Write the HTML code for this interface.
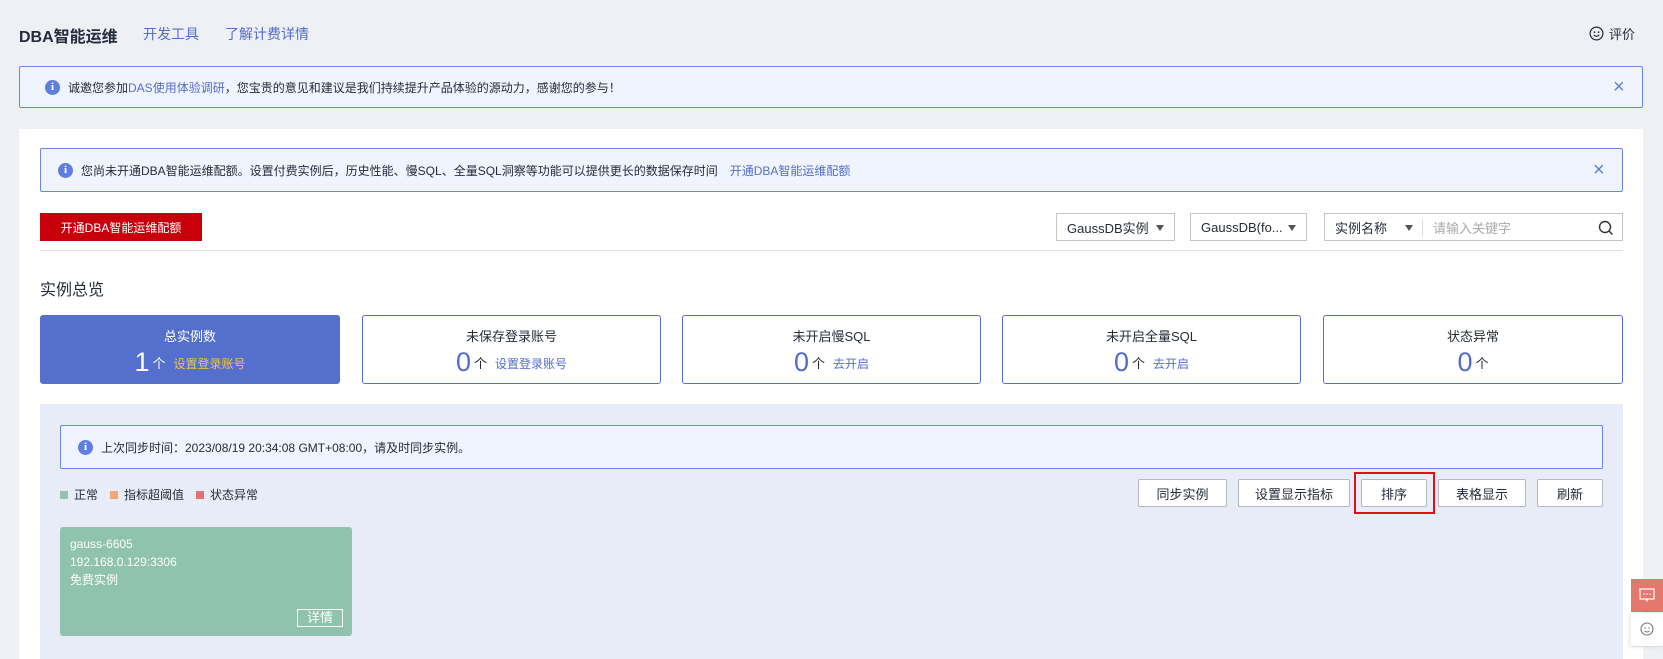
<!DOCTYPE html>
<html><head><meta charset="utf-8"><style>
*{margin:0;padding:0;box-sizing:border-box}
body{width:1663px;height:659px;overflow:hidden;background:#eef0f5;font-family:"Liberation Sans","Noto Sans CJK SC",sans-serif;font-size:12px;color:#252b3a;position:relative}
.a{position:absolute}
.info{display:inline-block;width:15px;height:15px;border-radius:50%;background:#5f7fe0;color:#fff;font-size:11px;font-weight:bold;text-align:center;line-height:15px;font-family:"Liberation Serif",serif}
.banner{background:#f0f4fe;border:1px solid #6b88e6;border-radius:2px;display:flex;align-items:center}
.x{color:#5f7fe0;font-size:20px;position:absolute;line-height:1}
.sel{border:1px solid #c4c6cc;background:#fff;height:28px;display:flex;align-items:center;padding:0 10px;font-size:13px}
.tri{width:0;height:0;border-left:4px solid transparent;border-right:4px solid transparent;border-top:6px solid #555;position:absolute}
.card{border:1px solid #5470cc;border-radius:3px;background:#fff;text-align:center}
.card .t{margin-top:10px;font-size:13px}
.card .n{margin-top:2px;font-size:13px}
.card .n b{font-weight:normal;font-size:27px;color:#526ecc;vertical-align:-3px;margin-right:3px}
.card .n a{color:#526ecc;margin-left:8px;font-size:12px}
.btn{background:#fff;border:1px solid #b5b8c0;border-radius:2px;height:28px;display:flex;align-items:center;justify-content:center;font-size:13px}
.lg{display:inline-block;width:8px;height:8px;margin-right:6px;vertical-align:0}
</style></head><body>
<div class="a" style="left:19px;top:23px;font-size:16px;font-weight:bold">DBA智能运维</div>
<div class="a" style="left:143px;top:24px;font-size:14px;color:#526ecc">开发工具</div>
<div class="a" style="left:225px;top:24px;font-size:14px;color:#526ecc">了解计费详情</div>
<div class="a" style="left:1589px;top:24px;font-size:13px;display:flex;align-items:center"><svg width="15" height="15" viewBox="0 0 16 16" style="margin-right:5px"><circle cx="8" cy="8" r="6.8" fill="none" stroke="#252b3a" stroke-width="1.3"/><circle cx="5.8" cy="6.5" r=".9" fill="#252b3a"/><circle cx="10.2" cy="6.5" r=".9" fill="#252b3a"/><path d="M5 9.5q3 3 6 0" fill="none" stroke="#252b3a" stroke-width="1.2"/></svg>评价</div>

<div class="a banner" style="left:19px;top:66px;width:1624px;height:42px;padding-left:25px"><span class="info">i</span><span style="margin-left:8px">诚邀您参加<span style="color:#526ecc">DAS使用体验调研</span>，您宝贵的意见和建议是我们持续提升产品体验的源动力，感谢您的参与！</span><span class="x" style="left:1593px;top:10px">×</span></div>

<div class="a" style="left:19px;top:129px;width:1624px;height:530px;background:#fff"></div>

<div class="a banner" style="left:40px;top:148px;width:1583px;height:44px;padding-left:17px"><span class="info">i</span><span style="margin-left:8px">您尚未开通DBA智能运维配额。设置付费实例后，历史性能、慢SQL、全量SQL洞察等功能可以提供更长的数据保存时间　<span style="color:#526ecc">开通DBA智能运维配额</span></span><span class="x" style="left:1552px;top:11px">×</span></div>

<div class="a" style="left:40px;top:213px;width:162px;height:28px;background:#c7000b;color:#fff;display:flex;align-items:center;justify-content:center">开通DBA智能运维配额</div>

<div class="a sel" style="left:1056px;top:213px;width:119px">GaussDB实例<span class="tri" style="right:10px;top:11px"></span></div>
<div class="a sel" style="left:1190px;top:213px;width:117px">GaussDB(fo...<span class="tri" style="right:10px;top:11px"></span></div>
<div class="a sel" style="left:1324px;top:213px;width:299px">实例名称<span class="tri" style="left:80px;top:11px"></span><span style="position:absolute;left:97px;top:6px;height:16px;border-left:1px solid #ddd"></span><span style="position:absolute;left:108px;color:#aaa">请输入关键字</span>
<svg class="a" style="right:8px;top:6px" width="16" height="16" viewBox="0 0 16 16"><circle cx="7" cy="7" r="5.5" fill="none" stroke="#333" stroke-width="1.4"/><path d="M11 11l3.5 3.5" stroke="#333" stroke-width="1.5"/></svg></div>
<div class="a" style="left:40px;top:250px;width:1583px;height:1px;background:#dcdfe6"></div>

<div class="a" style="left:40px;top:276px;font-size:16px">实例总览</div>

<div class="a card" style="left:40px;top:315px;width:300px;height:69px;background:#5470cc;border-color:#5470cc;color:#fff"><div class="t">总实例数</div><div class="n"><b style="color:#fff">1</b>个<a style="color:#f6c342">设置登录账号</a></div></div>
<div class="a card" style="left:362px;top:315px;width:299px;height:69px"><div class="t">未保存登录账号</div><div class="n"><b>0</b>个<a>设置登录账号</a></div></div>
<div class="a card" style="left:682px;top:315px;width:299px;height:69px"><div class="t">未开启慢SQL</div><div class="n"><b>0</b>个<a>去开启</a></div></div>
<div class="a card" style="left:1002px;top:315px;width:299px;height:69px"><div class="t">未开启全量SQL</div><div class="n"><b>0</b>个<a>去开启</a></div></div>
<div class="a card" style="left:1323px;top:315px;width:300px;height:69px"><div class="t">状态异常</div><div class="n"><b>0</b>个</div></div>

<div class="a" style="left:40px;top:404px;width:1583px;height:255px;background:#e8ecf7"></div>
<div class="a banner" style="left:60px;top:425px;width:1543px;height:44px;padding-left:17px"><span class="info">i</span><span style="margin-left:8px">上次同步时间：2023/08/19 20:34:08 GMT+08:00，请及时同步实例。</span></div>

<div class="a" style="left:60px;top:486px;font-size:12px"><span class="lg" style="background:#8fc3ae"></span>正常　<span class="lg" style="background:#f4a57a"></span>指标超阈值　<span class="lg" style="background:#dc7474"></span>状态异常</div>

<div class="a btn" style="left:1138px;top:479px;width:89px">同步实例</div>
<div class="a btn" style="left:1238px;top:479px;width:112px">设置显示指标</div>
<div class="a btn" style="left:1361px;top:479px;width:66px">排序</div>
<div class="a" style="left:1354px;top:472px;width:81px;height:42px;border:2px solid #e0101a"></div>
<div class="a btn" style="left:1438px;top:479px;width:88px">表格显示</div>
<div class="a btn" style="left:1537px;top:479px;width:66px">刷新</div>

<div class="a" style="left:60px;top:527px;width:292px;height:109px;background:#8fc3ae;border-radius:3px;color:#fff;padding:8px 10px;line-height:18px;font-size:12px">gauss-6605<br>192.168.0.129:3306<br>免费实例
<div class="a" style="left:237px;top:82px;width:46px;height:18px;border:1px solid #fff;text-align:center;line-height:16px;font-size:13px">详情</div></div>

<div class="a" style="left:1631px;top:579px;width:32px;height:33px;background:#e5776d"><svg width="32" height="33" viewBox="0 0 32 33"><rect x="9" y="10" width="14" height="10" fill="none" stroke="#fff" stroke-width="1.2"/><path d="M15 20l1 2 1-2" stroke="#fff" fill="none"/><circle cx="13" cy="15" r=".8" fill="#fff"/><circle cx="16" cy="15" r=".8" fill="#fff"/><circle cx="19" cy="15" r=".8" fill="#fff"/></svg></div>
<div class="a" style="left:1631px;top:613px;width:32px;height:34px;background:#fff;border-bottom:1px solid #ddd;box-shadow:-2px 0 4px rgba(0,0,0,.08)"><svg width="32" height="34" viewBox="0 0 32 34"><circle cx="16" cy="16" r="6" fill="none" stroke="#777" stroke-width="1.1"/><circle cx="14" cy="15" r=".7" fill="#777"/><circle cx="18" cy="15" r=".7" fill="#777"/><path d="M13.5 18q2.5 2 5 0" stroke="#777" fill="none"/></svg></div>
</body></html>
